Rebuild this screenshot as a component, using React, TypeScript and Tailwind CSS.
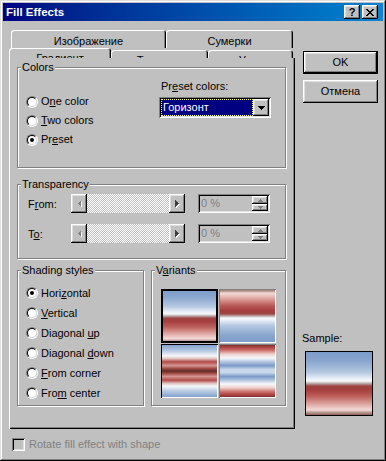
import React from 'react';

const raised =
  'shadow-[inset_-1px_-1px_#000,inset_1px_1px_#fff,inset_-2px_-2px_#808080,inset_2px_2px_#dfdfdf]';
const sunken =
  'shadow-[inset_1px_1px_#808080,inset_-1px_-1px_#fff,inset_2px_2px_#000,inset_-2px_-2px_#dfdfdf]';

const horizon =
  'bg-[image:linear-gradient(180deg,#7c9bc8_0%,#8aa7cf_15%,#b3c7e0_32%,#e6eef7_42%,#f8fafc_46%,#b8aaa8_50%,#9e4442_54%,#a63e3e_60%,#bc5e5a_70%,#dca39e_82%,#f3dbd8_92%,#b89890_96%,#8a6258_100%)]';

const Radio: React.FC<{ checked?: boolean }> = ({ checked }) => (
  <span className="w-[12px] h-[12px] shrink-0 rounded-full border border-t-[#808080] border-l-[#808080] border-b-white border-r-white flex items-center justify-center">
    <span className="w-[10px] h-[10px] rounded-full border border-t-black border-l-black border-b-[#dfdfdf] border-r-[#dfdfdf] bg-white flex items-center justify-center">
      {checked && <span className="w-[4px] h-[4px] rounded-full bg-black" />}
    </span>
  </span>
);

const RadioRow: React.FC<{ checked?: boolean; tall?: boolean; children: React.ReactNode }> = ({
  checked,
  tall,
  children,
}) => (
  <div className={`flex items-center gap-[3px] ${tall ? 'h-[20px]' : 'h-[19px]'}`}>
    <Radio checked={checked} />
    <span>{children}</span>
  </div>
);

const Group: React.FC<{ title: React.ReactNode; className?: string; children?: React.ReactNode }> = ({
  title,
  className,
  children,
}) => (
  <div className={`border border-[#808080] shadow-[inset_1px_1px_#fff,1px_1px_#fff] flex flex-col ${className ?? ''}`}>
    <span className="-mt-[7px] ml-[3px] px-[1px] w-fit bg-[#c0c0c0] leading-[13px]">{title}</span>
    {children}
  </div>
);

const ScrollBar: React.FC = () => (
  <div className="flex w-[114px] h-[19px]">
    <div className={`w-[16px] h-full bg-[#c0c0c0] flex items-center justify-center ${raised}`}>
      <svg width="5" height="8" shapeRendering="crispEdges">
        <polygon points="5,1 5,8 1.5,4.5" fill="#fff" />
        <polygon points="4,0 4,7 0.5,3.5" fill="#808080" />
      </svg>
    </div>
    <div className="flex-1 bg-[image:repeating-conic-gradient(#fff_0_25%,#c0c0c0_0_50%)] bg-[length:2px_2px]" />
    <div className={`w-[16px] h-full bg-[#c0c0c0] flex items-center justify-center ${raised}`}>
      <svg width="5" height="8" shapeRendering="crispEdges">
        <polygon points="1,1 1,8 4.5,4.5" fill="#fff" />
        <polygon points="0,0 0,7 3.5,3.5" fill="#404040" />
      </svg>
    </div>
  </div>
);

const Spin: React.FC = () => (
  <div className={`ml-[13px] w-[72px] h-[19px] p-[2px] flex bg-[#c0c0c0] ${sunken}`}>
    <span className="flex-1 pl-[1px] leading-[15px] text-[#808080]">0 %</span>
    <div className="w-[16px] flex flex-col">
      <div className={`h-[8px] bg-[#c0c0c0] flex items-center justify-center ${raised}`}>
        <svg width="5" height="3" shapeRendering="crispEdges">
          <polygon points="0,3 5,3 2.5,0" fill="#808080" />
        </svg>
      </div>
      <div className={`flex-1 bg-[#c0c0c0] flex items-center justify-center ${raised}`}>
        <svg width="5" height="3" shapeRendering="crispEdges">
          <polygon points="0,0 5,0 2.5,3" fill="#808080" />
        </svg>
      </div>
    </div>
  </div>
);

const TitleBar: React.FC = () => (
  <div className="h-[18px] shrink-0 flex items-center pl-[3px] pr-[5px] bg-linear-to-r from-[#000080] to-[#1084d0]">
    <span className="text-white font-bold text-[11.5px]">Fill Effects</span>
    <div className="ml-auto flex gap-[2px]">
      <div className={`w-[16px] h-[14px] bg-[#c0c0c0] flex items-center justify-center font-bold text-[11px] leading-[14px] ${raised}`}>
        ?
      </div>
      <div className={`w-[16px] h-[14px] bg-[#c0c0c0] flex items-center justify-center ${raised}`}>
        <svg width="8" height="7" shapeRendering="crispEdges">
          <path
            d="M0 0h2v1H0zM6 0h2v1H6zM1 1h2v1H1zM5 1h2v1H5zM2 2h4v1H2zM3 3h2v1H3zM2 4h4v1H2zM1 5h2v1H1zM5 5h2v1H5zM0 6h2v1H0zM6 6h2v1H6z"
            fill="#000"
          />
        </svg>
      </div>
    </div>
  </div>
);

const tabShape = 'rounded-t-[3px] shadow-[inset_1px_1px_#fff,inset_-1px_0_#000,inset_-2px_0_#808080]';

export default function App() {
  return (
    <div
      className={`w-[386px] h-[461px] bg-[#c0c0c0] p-[3px] flex flex-col text-[11px] leading-[13px] text-black font-['Liberation_Sans',Arial,sans-serif] shadow-[inset_-1px_-1px_#000,inset_1px_1px_#dfdfdf,inset_-2px_-2px_#808080,inset_2px_2px_#fff]`}
    >
      <TitleBar />
      <div className="flex">
        {/* left: tab control */}
        <div className="ml-[6px] mt-[9px] flex flex-col">
          <div className="h-[18px] flex pl-[2px]">
            <div className={`w-[155px] flex justify-center pt-[5px] ${tabShape}`}>Изображение</div>
            <div className={`w-[127px] flex justify-center pt-[5px] ${tabShape}`}>Сумерки</div>
          </div>
          <div className="h-[10px] flex overflow-hidden">
            <div className={`w-[102px] h-[20px] flex justify-center pt-[4px] ${tabShape}`}>Градиент</div>
            <div className={`w-[97px] h-[20px] mt-[2px] flex justify-center pt-[4px] ${tabShape}`}>Текстура</div>
            <div className={`w-[85px] h-[20px] mt-[2px] flex justify-center pt-[4px] ${tabShape}`}>Узор</div>
          </div>

          <div className="w-[286px] h-[371px] pl-[8px] flex flex-col shadow-[inset_1px_0_#fff,inset_-1px_-1px_#000,inset_-2px_-2px_#808080]">
            <Group title="Colors" className="mt-[9px] w-[269px] h-[101px]">
              <div className="flex">
                <div className="w-[141px] pl-[8px] mt-[18px] flex flex-col">
                  <RadioRow>
                    O<span className="underline">n</span>e color
                  </RadioRow>
                  <RadioRow>
                    <span className="underline">T</span>wo colors
                  </RadioRow>
                  <RadioRow checked>
                    Pr<span className="underline">e</span>set
                  </RadioRow>
                </div>
                <div className="mt-[6px] flex flex-col">
                  <span className="pl-[2px]">
                    Pr<span className="underline">e</span>set colors:
                  </span>
                  <div className={`mt-[4px] w-[112px] h-[21px] p-[2px] flex bg-white ${sunken}`}>
                    <div className="flex-1 bg-[#000080] text-white pl-[2px] leading-[17px] outline-1 outline-dotted outline-[#ffff80] -outline-offset-1">
                      Горизонт
                    </div>
                    <div className={`w-[16px] h-full bg-[#c0c0c0] flex items-center justify-center ${raised}`}>
                      <svg width="7" height="4" shapeRendering="crispEdges">
                        <polygon points="0,0 7,0 3.5,4" fill="#000" />
                      </svg>
                    </div>
                  </div>
                </div>
              </div>
            </Group>

            <Group title="Transparency" className="mt-[16px] w-[269px] h-[75px]">
              <div className="flex items-center mt-[3px]">
                <span className="w-[53px] pl-[10px] pt-[2px]">
                  F<span className="underline">r</span>om:
                </span>
                <ScrollBar />
                <Spin />
              </div>
              <div className="flex items-center mt-[11px]">
                <span className="w-[53px] pl-[10px] pt-[2px]">
                  T<span className="underline">o</span>:
                </span>
                <ScrollBar />
                <Spin />
              </div>
            </Group>

            <div className="mt-[11px] flex gap-[7px]">
              <Group title="Shading styles" className="w-[127px] h-[136px]">
                <div className="pl-[8px] mt-[6px] flex flex-col">
                  <RadioRow tall checked>
                    Hori<span className="underline">z</span>ontal
                  </RadioRow>
                  <RadioRow tall>
                    <span className="underline">V</span>ertical
                  </RadioRow>
                  <RadioRow tall>
                    Diagonal <span className="underline">u</span>p
                  </RadioRow>
                  <RadioRow tall>
                    Diagonal <span className="underline">d</span>own
                  </RadioRow>
                  <RadioRow tall>
                    <span className="underline">F</span>rom corner
                  </RadioRow>
                  <RadioRow tall>
                    Fro<span className="underline">m</span> center
                  </RadioRow>
                </div>
              </Group>
              <Group
                title={
                  <>
                    V<span className="underline">a</span>riants
                  </>
                }
                className="w-[135px] h-[136px]"
              >
                <div className="ml-[9px] mt-[12px] grid grid-cols-[57px_57px] grid-rows-[54px_54px] gap-[1px]">
                  <div className={`${horizon} shadow-[inset_0_0_0_2px_#000]`} />
                  <div className="bg-[image:linear-gradient(0deg,#7c9bc8_0%,#8aa7cf_15%,#b3c7e0_32%,#e6eef7_42%,#f8fafc_46%,#b8aaa8_50%,#9e4442_54%,#a63e3e_60%,#bc5e5a_70%,#dca39e_82%,#f3dbd8_92%,#b89890_96%,#8a6258_100%)] shadow-[inset_1px_1px_#808080,inset_-1px_-1px_#fff]" />
                  <div className="bg-[image:linear-gradient(180deg,#7c9bc8_0%,#b3c7e0_12%,#f6f8fb_22%,#e0c4c0_27%,#b04a48_33%,#d49690_40%,#9c4440_46%,#5e3028_50%,#9c4440_54%,#d49690_60%,#b04a48_67%,#e0c4c0_73%,#f6f8fb_78%,#b3c7e0_88%,#7c9bc8_100%)] shadow-[inset_1px_1px_#000,inset_-1px_-1px_#fff]" />
                  <div className="bg-[image:linear-gradient(180deg,#5a2e28_0%,#a63e3e_5%,#c86864_11%,#efd2ce_19%,#f6f8fb_26%,#a9bfdc_34%,#7c9bc8_40%,#c9d7ea_47%,#c9d7ea_53%,#7c9bc8_60%,#a9bfdc_66%,#f6f8fb_74%,#efd2ce_81%,#c86864_89%,#a63e3e_95%,#5a2e28_100%)] shadow-[inset_1px_1px_#808080,inset_-1px_-1px_#fff]" />
                </div>
              </Group>
            </div>
          </div>

          <div className="mt-[9px] ml-[3px] flex items-center gap-[4px]">
            <span className={`w-[13px] h-[13px] bg-[#c0c0c0] ${sunken}`} />
            <span className="text-[#808080]">Rotate fill effect with shape</span>
          </div>
        </div>

        {/* right: buttons + sample */}
        <div className="ml-[8px] mt-[30px] flex flex-col">
          <div className="w-[75px] h-[23px] border border-black">
            <div className={`w-full h-full flex items-center justify-center ${raised}`}>OK</div>
          </div>
          <div className={`mt-[6px] w-[75px] h-[23px] flex items-center justify-center ${raised}`}>Отмена</div>
          <span className="mt-[229px] -ml-[1px]">Sample:</span>
          <div className={`mt-[6px] ml-[2px] w-[68px] h-[65px] border border-black ${horizon}`} />
        </div>
      </div>
    </div>
  );
}
